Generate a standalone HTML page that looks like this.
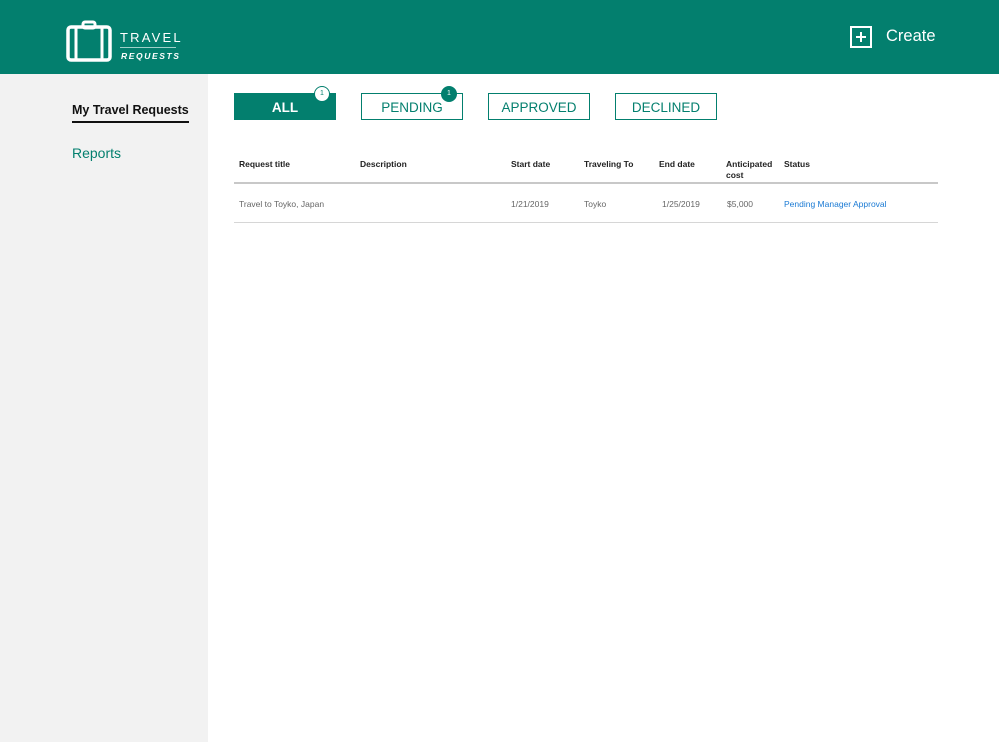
<!DOCTYPE html>
<html><head><style>
*{margin:0;padding:0;box-sizing:border-box}
body{width:999px;height:742px;font-family:"Liberation Sans",sans-serif;background:#fff;position:relative;overflow:hidden}
.hdr{position:absolute;left:0;top:0;width:999px;height:74px;background:#037f6e}
.side{position:absolute;left:0;top:74px;width:208px;height:668px;background:#f2f2f2}
.abs{position:absolute}
.tab{position:absolute;top:93px;width:102px;height:27px;border:1px solid #037f6e;color:#037f6e;font-size:13.5px;text-align:center;line-height:27px}
.badge{position:absolute;width:16px;height:16px;border-radius:50%;font-size:7px;text-align:center;line-height:14px}
.th{position:absolute;top:159px;font-size:8.5px;font-weight:bold;color:#222;line-height:11px}
.td{position:absolute;top:199px;font-size:8.5px;color:#666}
</style></head><body>
<div class="hdr">
<svg class="abs" style="left:66px;top:20px" width="46" height="42" viewBox="0 0 46 42"><rect x="2" y="7" width="42" height="33" rx="3" fill="none" stroke="#fff" stroke-width="3.5"/><rect x="17" y="2" width="12" height="6" rx="2" fill="none" stroke="#fff" stroke-width="3"/><line x1="10" y1="8" x2="10" y2="39" stroke="#fff" stroke-width="3"/><line x1="36" y1="8" x2="36" y2="39" stroke="#fff" stroke-width="3"/></svg>
<div class="abs" style="left:120px;top:30px;color:#fff;font-size:13px;letter-spacing:2.2px">TRAVEL</div>
<div class="abs" style="left:120px;top:47px;width:56px;border-top:1px solid #9fd1c9"></div>
<div class="abs" style="left:121px;top:51px;color:#fff;font-size:8.5px;font-weight:bold;font-style:italic;letter-spacing:1.6px">REQUESTS</div>
<svg class="abs" style="left:850px;top:26px" width="22" height="22"><rect x="1" y="1" width="20" height="20" fill="none" stroke="#fff" stroke-width="2"/><path d="M11 6v10M6 11h10" stroke="#fff" stroke-width="2"/></svg>
<div class="abs" style="left:886px;top:27px;color:#fff;font-size:16.5px">Create</div>
</div>
<div class="side">
<div class="abs" style="left:72px;top:29px;font-size:12.5px;font-weight:bold;color:#111;padding-bottom:4px;border-bottom:2px solid #111">My Travel Requests</div>
<div class="abs" style="left:72px;top:71px;font-size:14px;color:#037f6e">Reports</div>
</div>
<div class="tab" style="left:234px;background:#037f6e;color:#fff;font-weight:bold">ALL</div>
<div class="badge" style="left:314px;top:86px;background:#fff;border:1px solid #037f6e;color:#037f6e">1</div>
<div class="tab" style="left:361px">PENDING</div>
<div class="badge" style="left:441px;top:86px;background:#037f6e;border:1px solid #037f6e;color:#fff">1</div>
<div class="tab" style="left:488px">APPROVED</div>
<div class="tab" style="left:615px">DECLINED</div>
<div class="th" style="left:239px">Request title</div>
<div class="th" style="left:360px">Description</div>
<div class="th" style="left:511px">Start date</div>
<div class="th" style="left:584px">Traveling To</div>
<div class="th" style="left:659px">End date</div>
<div class="th" style="left:726px">Anticipated<br>cost</div>
<div class="th" style="left:784px">Status</div>
<div class="abs" style="left:234px;top:182px;width:704px;border-top:2px solid #c8c8c8"></div>
<div class="td" style="left:239px">Travel to Toyko, Japan</div>
<div class="td" style="left:511px">1/21/2019</div>
<div class="td" style="left:584px">Toyko</div>
<div class="td" style="left:662px">1/25/2019</div>
<div class="td" style="left:727px">$5,000</div>
<div class="td" style="left:784px;color:#1a7ad4">Pending Manager Approval</div>
<div class="abs" style="left:234px;top:222px;width:704px;border-top:1px solid #d6d6d6"></div>
</body></html>
